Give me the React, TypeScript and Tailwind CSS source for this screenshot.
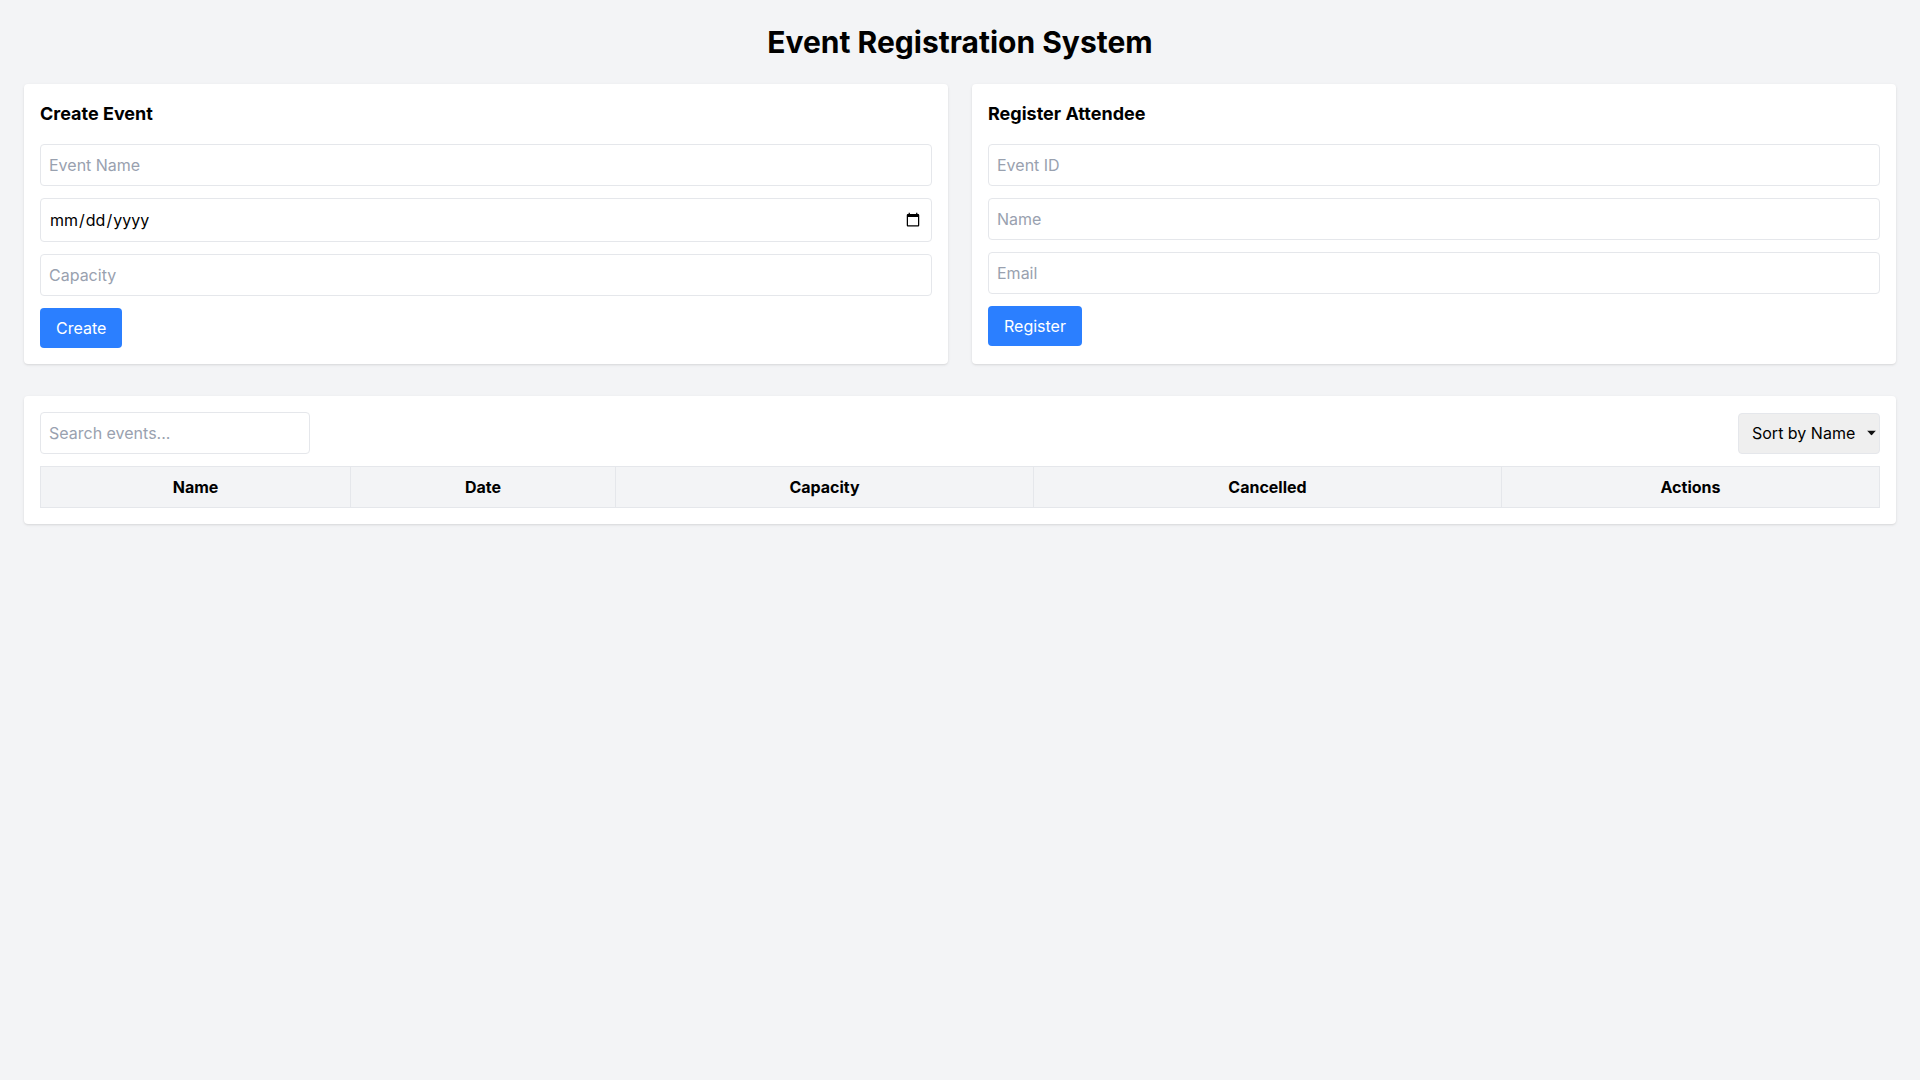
import React, { useState } from 'react';

const inputCls =
  'w-full mb-3 px-2 py-2 border border-gray-200 rounded text-base placeholder:text-gray-400 outline-none';

export default function App() {
  const [search, setSearch] = useState('');
  const [sort, setSort] = useState('name');

  return (
    <div className="min-h-screen bg-gray-100 p-6 text-black" style={{ fontFamily: 'Inter, "Noto Sans", sans-serif' }}>
      <h1 className="text-3xl font-bold text-center mb-6">Event Registration System</h1>

      {/* Forms */}
      <div className="grid grid-cols-2 gap-6 mb-8">
        <div className="bg-white p-4 rounded shadow">
          <h2 className="text-lg font-bold mb-4">Create Event</h2>
          <input className={inputCls} placeholder="Event Name" />
          <input type="date" className={`${inputCls} h-[44px]`} />
          <input type="number" className={inputCls} placeholder="Capacity" />
          <button className="bg-blue-500 text-white px-4 py-2 rounded">Create</button>
        </div>

        <div className="bg-white p-4 rounded shadow">
          <h2 className="text-lg font-bold mb-4">Register Attendee</h2>
          <input className={inputCls} placeholder="Event ID" />
          <input className={inputCls} placeholder="Name" />
          <input type="email" className={inputCls} placeholder="Email" />
          <button className="bg-blue-500 text-white px-4 py-2 rounded">Register</button>
        </div>
      </div>

      {/* Events table */}
      <div className="bg-white p-4 rounded shadow">
        <div className="flex items-center justify-between mb-3">
          <input
            className="w-[270px] px-2 py-2 border border-gray-200 rounded text-base placeholder:text-gray-400 outline-none"
            placeholder="Search events..."
            value={search}
            onChange={e => setSearch(e.target.value)}
          />
          <div className="relative">
            <select
              className="appearance-none w-[142px] h-[41px] pl-[13px] pr-6 border border-gray-200 rounded bg-[#efefef] text-base outline-none"
              value={sort}
              onChange={e => setSort(e.target.value)}
            >
              <option value="name">Sort by Name</option>
              <option value="date">Sort by Date</option>
            </select>
            <svg
              className="absolute right-[4px] top-1/2 -translate-y-1/2 pointer-events-none"
              width="9"
              height="5"
              viewBox="0 0 9 5"
            >
              <path d="M0 0 L9 0 L4.5 5 Z" fill="#111" />
            </svg>
          </div>
        </div>
        <table className="w-full table-fixed border-collapse border border-gray-200">
          <thead>
            <tr className="bg-gray-100">
              <th className="w-[310px] border border-gray-200 p-2">Name</th>
              <th className="w-[265px] border border-gray-200 p-2">Date</th>
              <th className="w-[418px] border border-gray-200 p-2">Capacity</th>
              <th className="w-[468px] border border-gray-200 p-2">Cancelled</th>
              <th className="border border-gray-200 p-2">Actions</th>
            </tr>
          </thead>
          <tbody></tbody>
        </table>
      </div>
    </div>
  );
}
